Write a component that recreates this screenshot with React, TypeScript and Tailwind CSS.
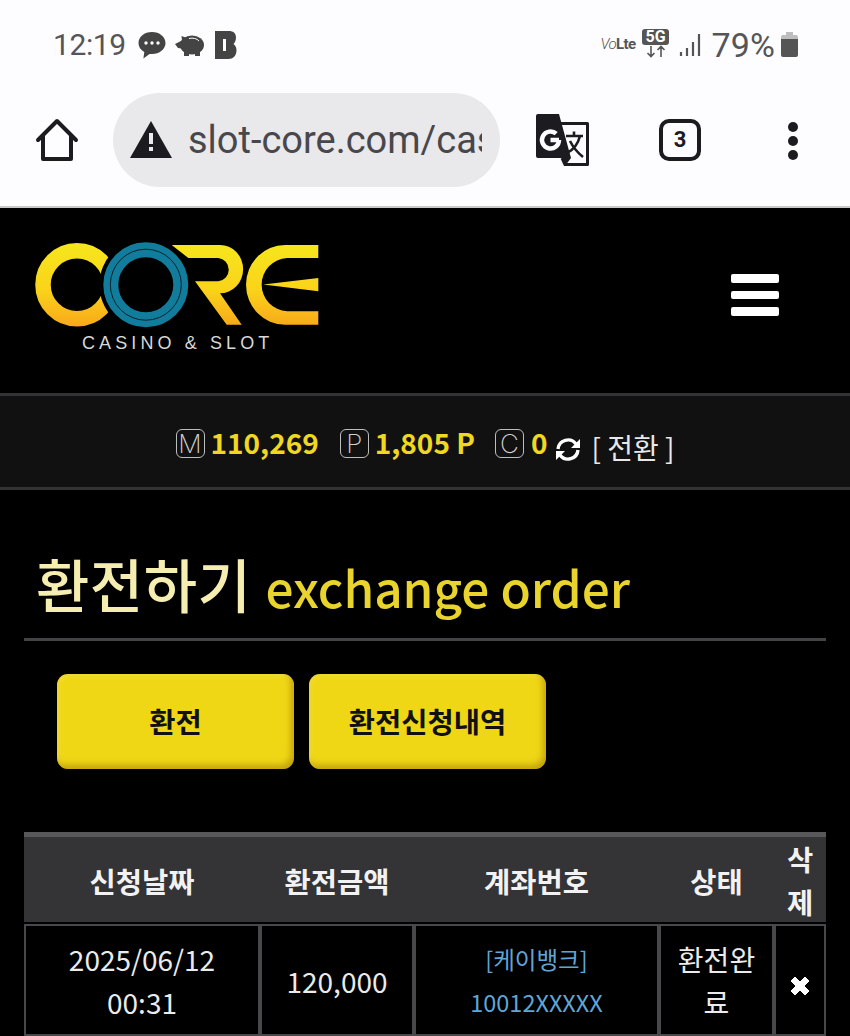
import { useId } from 'react';

const cjk = "font-['Noto_Sans_CJK_KR','Noto_Sans',sans-serif]";

function CoreLogo() {
  const id = useId();
  return (
    <svg width="290" height="90" viewBox="0 0 290 90" className="block">
      <defs>
        <linearGradient id={id} gradientUnits="userSpaceOnUse" x1="0" y1="5" x2="0" y2="86">
          <stop offset="0" stopColor="#f6e61c" />
          <stop offset="0.55" stopColor="#fad31a" />
          <stop offset="1" stopColor="#f9a91a" />
        </linearGradient>
      </defs>
      {/* C */}
      <circle cx="42" cy="44.700" r="34" fill="none" stroke={`url(#${id})`} strokeWidth="15.500" />
      {/* R */}
      <path fill={`url(#${id})`} d="M136.700 5H185A23 24 0 0 1 185 53.300L206.700 84.700H191.700L160 41.300H183.300A11.500 11.700 0 0 0 183.300 18H153.300Z" />
      {/* E */}
      <path fill={`url(#${id})`} d="M283.300 5V18H252A27 26.700 0 0 0 252 71.300H283.300V84.700H250A39 39.850 0 0 1 250 5Z" />
      <path fill={`url(#${id})`} d="M228.300 44.500 283.300 38V51.300Z" />
      {/* O */}
      <circle cx="110.800" cy="44.700" r="46.500" fill="#000" />
      <circle cx="110.800" cy="44.700" r="35" fill="none" stroke="#127c9c" strokeWidth="15" />
      <circle cx="110.800" cy="44.700" r="35.500" fill="none" stroke="#07222c" strokeWidth="1" />
    </svg>
  );
}

export default function App() {
  return (
    <div className={`w-[850px] h-[1036px] overflow-hidden bg-black ${cjk}`}>
      {/* status bar */}
      <div className="h-[88px] bg-[#fdfcfe] flex items-center justify-between pl-[53px] pr-[52px] pt-[3px] pb-[2px]">
        <div className="flex items-center text-[#555558]">
          <span className="text-[30px] font-['Roboto'] tracking-[-0.4px] leading-none">12:19</span>
          <svg width="30" height="30" viewBox="0 0 30 30" className="ml-[11px]">
            <path fill="#444" d="M15 2C7.300 2 1.500 6.900 1.500 13c0 3.800 2.200 7 5.800 9l-.9 6.500L12.500 24c.8.100 1.700.100 2.500.100 7.500 0 13.500-5 13.500-11.100S22.500 2 15 2z" />
            <circle cx="9" cy="13" r="1.700" fill="#fff" /><circle cx="15" cy="13" r="1.700" fill="#fff" /><circle cx="21" cy="13" r="1.700" fill="#fff" />
          </svg>
          <svg width="30" height="24" viewBox="0 0 30 24" className="ml-[8px]">
            <ellipse cx="17" cy="12" rx="12" ry="9.500" fill="#444" />
            <path fill="#444" d="M0 11 7 7.500 6.500 3 12 5l-2 11-7-1zM9 18h5v5H9zM20 18h5v5h-5z" />
            <path fill="none" stroke="#fff" strokeWidth="1" d="M14 5.500c4-1 8 0 10 2.500" />
          </svg>
          <svg width="22" height="28" viewBox="0 0 22 28" className="ml-[10px]">
            <path fill="#444" fillRule="evenodd" d="M0 0h14c4 0 7 2 7 6.500 0 3-1 5-2.500 6.500 2 1.500 3 3.500 3 6.500 0 5-3.500 8.500-8 8.500H0zM8 8v12h3V8z" />
          </svg>
        </div>
        <div className="flex items-center text-[#555558]">
          <span className="text-[15px] leading-none mr-[7px] font-['Roboto'] tracking-[-0.6px]"><span className="italic font-light">Vo</span><span className="font-bold">Lte</span></span>
          <div className="flex flex-col items-center mr-[10px] -mt-[2px]">
            <span className="bg-[#555] text-white text-[16px] font-bold leading-none rounded-[3px] px-[3px] font-['Roboto']">5G</span>
            <svg width="20" height="13" viewBox="0 0 20 13">
              <path stroke="#555" strokeWidth="1.600" fill="none" d="M5 1v10M1.500 8 5 11.500 8.500 8M15 12V2M11.500 5 15 1.500 18.500 5" />
            </svg>
          </div>
          <svg width="22" height="24" viewBox="0 0 22 24" className="mr-[11px]">
            <path stroke="#555" strokeWidth="2.200" fill="none" d="M2 19v4M8 15v8M14 9v14M20 1v22" />
          </svg>
          <span className="text-[34px] font-['Roboto'] leading-none tracking-[0.1px] mr-[6px]">79%</span>
          <svg width="17" height="25" viewBox="0 0 17 25">
            <path fill="#bdbdbf" d="M5 0h7v3h3a2 2 0 0 1 2 2v3H0V5a2 2 0 0 1 2-2h3z" />
            <path fill="#555" d="M0 7h17v16a2 2 0 0 1-2 2H2a2 2 0 0 1-2-2z" />
          </svg>
        </div>
      </div>

      {/* browser toolbar */}
      <div className="h-[120px] bg-[#fdfcfe] border-b-2 border-[#c9c9cb] flex items-start">
        <svg width="44" height="44" viewBox="0 0 44 44" className="ml-[35px] mt-[30px]">
          <path fill="none" stroke="#1c1b1f" strokeWidth="4" strokeLinejoin="round" strokeLinecap="round" d="M3 22 22 3l19 19M8 18v23h28V18" />
        </svg>
        <div className="ml-[34px] mt-[5px] w-[387px] h-[94px] rounded-[47px] bg-[#e9e8ea] flex items-center pl-[16px]">
          <svg width="44" height="38" viewBox="0 0 44 38">
            <path fill="#1c1b1f" d="M22 0 43 37H1z" />
            <rect x="20" y="12" width="4" height="11" fill="#e9e8ea" />
            <rect x="20" y="26" width="4" height="4" fill="#e9e8ea" />
          </svg>
          <div className="ml-[15px] w-[294px] overflow-hidden whitespace-nowrap text-[38px] leading-none text-[#48474c] font-['Roboto']">slot-core.com/casino</div>
        </div>
        <svg width="54" height="54" viewBox="0 0 54 54" className="ml-[36px] mt-[26px]">
          <path fill="none" stroke="#1c1b1f" strokeWidth="3" strokeLinejoin="round" d="M24 9.500H51.500V50.500H29L26 44" />
          <path fill="#1c1b1f" d="M2 0H23L35 44H2a2 2 0 0 1-2-2V2a2 2 0 0 1 2-2z" />
          <path fill="#1c1b1f" d="M26 44H35L29 52z" />
          <path fill="none" stroke="#fdfcfe" strokeWidth="4.500" d="M14.500 26H23M23 26a8.500 8.500 0 1 1-2.800-6.300" />
          <path fill="none" stroke="#1c1b1f" strokeWidth="2.600" d="M30 22H47M38 17.500V22M44 22C42 30 37 36 31 39M34 27C37 33 42 39 47 43" />
        </svg>
        <div className="ml-[69px] mt-[31px] w-[42px] h-[42px] rounded-[10px] border-[4px] border-[#1c1b1f] flex items-center justify-center text-[22px] font-bold font-['Roboto'] text-[#1c1b1f] leading-none">3</div>
        <div className="ml-[87px] mt-[34px] flex flex-col gap-[4px]">
          <span className="w-[10px] h-[10px] rounded-full bg-[#1c1b1f]" />
          <span className="w-[10px] h-[10px] rounded-full bg-[#1c1b1f]" />
          <span className="w-[10px] h-[10px] rounded-full bg-[#1c1b1f]" />
        </div>
      </div>

      {/* site header */}
      <div className="h-[185px] bg-black flex items-start justify-between pl-[35px] pr-[71px]">
        <div className="relative mt-[32px] w-[290px] h-[90px]">
          <CoreLogo />
          <span className="absolute left-[47px] top-[94px] text-[18px] leading-none tracking-[4.100px] text-[#d8d8d8] font-['Liberation_Sans'] whitespace-nowrap">CASINO &amp; SLOT</span>
        </div>
        <div className="mt-[66px] flex flex-col gap-[8px]">
          <span className="w-[48px] h-[9px] bg-white rounded-[2px]" />
          <span className="w-[48px] h-[8px] bg-white rounded-[2px]" />
          <span className="w-[48px] h-[9px] bg-white rounded-[2px]" />
        </div>
      </div>

      {/* wallet bar */}
      <div className="h-[97px] bg-[#111112] border-y-[3px] border-[#333335] flex items-center justify-center text-[28px] font-bold text-[#efd81f] leading-none">
        <Badge letter="M" />
        <span className="ml-[6px]">110,269</span>
        <Badge letter="P" className="ml-[21px]" />
        <span className="ml-[6px]">1,805 P</span>
        <Badge letter="C" className="ml-[20px]" />
        <span className="ml-[7px]">0</span>
        <svg width="26" height="25" viewBox="0 0 26 25" className="ml-[8px] mt-[16px]">
          <path fill="none" stroke="#fff" strokeWidth="3.400" d="M3 12A10 10 0 0 1 21 7M23 13A10 10 0 0 1 5 18" />
          <path fill="#fff" d="M25 2v9h-9zM1 23v-9h9z" />
        </svg>
        <span className="ml-[10px] text-[28px] font-normal text-[#e8e8e8] mt-[10px]">[ 전환 ]</span>
      </div>

      {/* title */}
      <div className="mx-[24px] mt-[49px] h-[102px] border-b-[3px] border-[#444446] flex items-baseline pl-[12px] whitespace-nowrap">
        <span className="text-[58px] leading-[88px] font-medium text-[#f5eeb0] tracking-[0.5px]">환전하기</span>
        <span className="ml-[14px] text-[49.500px] leading-[88px] font-medium text-[#e8d42c]">exchange order</span>
      </div>

      {/* tabs */}
      <div className="flex gap-[15px] pl-[57px] mt-[33px]">
        <TabButton label="환전" />
        <TabButton label="환전신청내역" />
      </div>

      {/* table */}
      <div className="mx-[24px] mt-[63px] w-[802px]">
        <div className="grid grid-cols-[236px_154px_245px_115px_52px] h-[90px] pb-[3px] bg-[#343336] border-t-[5px] border-[#58585a] text-[28.500px] font-bold text-[#f2f2f2] text-center items-center leading-[43px]">
          <div>신청날짜</div>
          <div>환전금액</div>
          <div>계좌번호</div>
          <div>상태</div>
          <div className="px-[12px]">삭제</div>
        </div>
        <div className="grid grid-cols-[236px_154px_245px_115px_52px] h-[112px] mt-[2px] text-center text-[28px] text-[#ebebeb] leading-[43px]">
          <Cell>2025/06/12<br />00:31</Cell>
          <Cell>120,000</Cell>
          <Cell className="text-[#5fa6d6] text-[23.500px]">[케이뱅크]<br />10012XXXXX</Cell>
          <Cell className="px-[12px]">환전완료</Cell>
          <Cell>
            <svg width="20" height="20" viewBox="0 0 20 20" fill="#fff" className="mt-[10px]">
              <path d="M1 5l4-4 5 5 5-5 4 4-5 5 5 5-4 4-5-5-5 5-4-4 5-5z" strokeLinejoin="round" stroke="#fff" strokeWidth="1" />
            </svg>
          </Cell>
        </div>
      </div>
    </div>
  );
}

function Badge({ letter, className = '' }: { letter: string; className?: string }) {
  return (
    <span className={`mt-[4px] w-[29px] h-[29px] rounded-[6px] border-[1.500px] border-[#bdbdbd] flex items-center justify-center text-[26px] font-extralight text-[#d0d0d0] font-['Inter'] ${className}`}>
      {letter}
    </span>
  );
}

function TabButton({ label }: { label: string }) {
  return (
    <button className="w-[237px] h-[95px] rounded-[11px] bg-[#efd716] shadow-[inset_-3px_-4px_6px_rgba(150,110,0,0.5),inset_2px_2px_4px_rgba(255,240,120,0.35)] text-[28.500px] font-bold text-[#111]">
      {label}
    </button>
  );
}

function Cell({ children, className = '' }: { children: React.ReactNode; className?: string }) {
  return <div className={`border-2 border-[#48484a] pt-[2px] flex items-center justify-center ${className}`}><div>{children}</div></div>;
}
